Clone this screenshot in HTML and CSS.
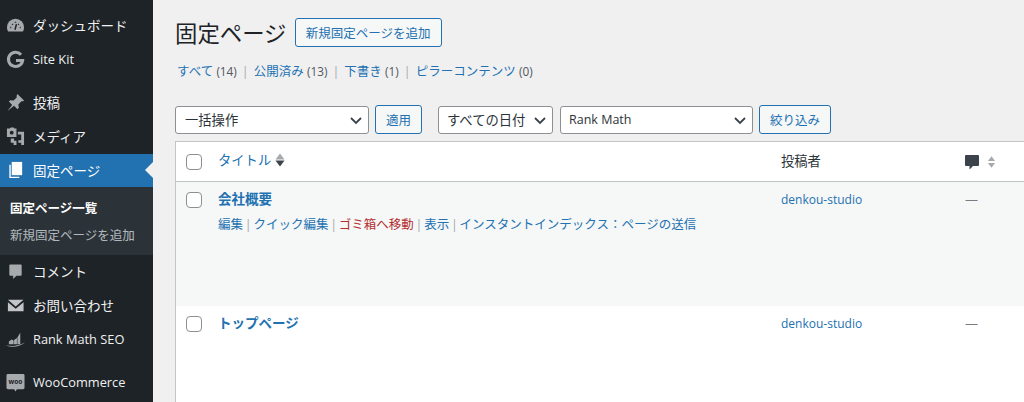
FILE: index.html
```html
<!DOCTYPE html>
<html lang="ja">
<head>
  <meta charset="UTF-8">
  <title>固定ページ</title>
  <link rel="stylesheet" href="styles.css">
</head>
<body>

  <nav class="sidebar">
    <ul class="menu">
      <li><a href="#">
        <svg class="menu-icon" viewBox="0 0 20 20"><path d="M10 3a9 9 0 0 0-9 9c0 1.500.4 3 1.200 4.200h15.600A9 9 0 0 0 19 12a9 9 0 0 0-9-9z"/><path class="cut" d="M9.500 14.500l1.500-6M4.500 12h1M14.500 12h1M6.500 8.500l.7.7M10 6v1M13.500 8.500l-.7.7"/></svg>
        ダッシュボード</a></li>
      <li><a href="#">
        <svg class="menu-icon" viewBox="0 0 20 20"><path class="stroke" d="M15.800 5A7.500 7.500 0 1 0 17.500 11H10.500"/></svg>
        <span class="latin">Site Kit</span></a></li>
      <li class="gap"><a href="#">
        <svg class="menu-icon" viewBox="0 0 20 20"><path d="M12 1l7 7-1.500 1-1-.5-3.500 3.500.5 3.500-1.500 1.500-3.500-3.500L1.500 19l5-6.500L3 9l1.500-1.500 3.500.5L11.500 4.500 11 3.500z"/></svg>
        投稿</a></li>
      <li><a href="#">
        <svg class="menu-icon" viewBox="0 0 20 20"><path d="M1 1.500h3l1-1h3l1 1h2v9H1z"/><circle class="hole" cx="6" cy="6" r="2"/><path d="M12.500 5H19v14h-3v-2.500h-3v-2.500h3V8h-3.500zM5 12h3.500v2.500H11V19H8v-2.500H5z"/></svg>
        メディア</a></li>
      <li class="current"><a href="#">
        <svg class="menu-icon" viewBox="0 0 20 20"><path d="M6 2h11v14H6z"/><path d="M3.500 5H5v12.500h9V19H3.500z"/></svg>
        固定ページ</a>
        <ul class="submenu">
          <li class="sub-current"><a href="#">固定ページ一覧</a></li>
          <li><a href="#">新規固定ページを追加</a></li>
        </ul>
      </li>
      <li><a href="#">
        <svg class="menu-icon" viewBox="0 0 20 20"><path d="M4.500 2.500h11a1 1 0 0 1 1 1v10a1 1 0 0 1-1 1H11l-3.500 3.500v-3.500h-3a1 1 0 0 1-1-1v-10a1 1 0 0 1 1-1z"/></svg>
        コメント</a></li>
      <li><a href="#">
        <svg class="menu-icon" viewBox="0 0 20 20"><path class="bright" d="M2 4h16.500L10.200 11zM2 6.500l8.200 7 8.300-7V16H2z"/></svg>
        お問い合わせ</a></li>
      <li><a href="#">
        <svg class="menu-icon" viewBox="0 0 20 20"><path d="M3 12l3-2 2 1v4H3zM8.500 10.500l3-2V15h-3zM12 8l3-5v12h-3z"/><path d="M0 16c6 1.500 13 1 20-3-5 5-14 6-20 3z"/></svg>
        <span class="latin">Rank Math SEO</span></a></li>
      <li class="gap"><a href="#">
        <svg class="menu-icon" viewBox="0 0 20 20"><path d="M2 1h16a1.500 1.500 0 0 1 1.500 1.500v13A1.500 1.500 0 0 1 18 17h-6.500L10 19.500 8.500 17H2A1.500 1.500 0 0 1 .5 15.500v-13A1.500 1.500 0 0 1 2 1z"/><text class="woo-text" x="10" y="11.500" text-anchor="middle">woo</text></svg>
        <span class="latin">WooCommerce</span></a></li>
    </ul>
  </nav>

  <main class="content">
    <div class="title-row">
      <h1>固定ページ</h1>
      <a class="button add-new" href="#">新規固定ページを追加</a>
    </div>

    <ul class="views">
      <li><a href="#">すべて</a> <span class="count">(14)</span></li>
      <li><a href="#">公開済み</a> <span class="count">(13)</span></li>
      <li><a href="#">下書き</a> <span class="count">(1)</span></li>
      <li><a href="#">ピラーコンテンツ</a> <span class="count">(0)</span></li>
    </ul>

    <div class="tablenav">
      <div class="select select-bulk">一括操作
        <svg class="chevron" viewBox="0 0 16 16"><path d="M3 6l5 5 5-5"/></svg></div>
      <a class="button apply" href="#">適用</a>
      <div class="select select-date">すべての日付
        <svg class="chevron" viewBox="0 0 16 16"><path d="M3 6l5 5 5-5"/></svg></div>
      <div class="select select-rank">Rank Math
        <svg class="chevron" viewBox="0 0 16 16"><path d="M3 6l5 5 5-5"/></svg></div>
      <a class="button filter" href="#">絞り込み</a>
    </div>

    <table class="pages">
      <thead>
        <tr>
          <th class="col-check"><span class="checkbox"></span></th>
          <th class="col-title"><a href="#">タイトル</a>
            <svg class="sort" viewBox="0 0 10 14"><path class="sort-up" d="M5 .5l4.500 6H.5z"/><path class="sort-down" d="M5 13.500l4.500-6H.5z"/></svg></th>
          <th class="col-author">投稿者</th>
          <th class="col-comments">
            <svg class="bubble" viewBox="0 0 14 16"><path d="M1 1h12a1 1 0 0 1 1 1v9a1 1 0 0 1-1 1H8l-3.500 3.500V12H1a1 1 0 0 1-1-1V2a1 1 0 0 1 1-1z"/></svg>
            <svg class="sort sort-plain" viewBox="0 0 10 14"><path d="M5 .5l4 5.500H1zM5 13.500L1 8h8z"/></svg>
          </th>
        </tr>
      </thead>
      <tbody>
        <tr class="alt tall">
          <td class="col-check"><span class="checkbox"></span></td>
          <td class="col-title">
            <a class="row-title" href="#">会社概要</a>
            <div class="row-actions">
              <a href="#">編集</a> | <a href="#">クイック編集</a> | <a class="trash" href="#">ゴミ箱へ移動</a> | <a href="#">表示</a> | <a href="#">インスタントインデックス：ページの送信</a>
            </div>
          </td>
          <td class="col-author"><a href="#">denkou-studio</a></td>
          <td class="col-comments dash">—</td>
        </tr>
        <tr>
          <td class="col-check"><span class="checkbox"></span></td>
          <td class="col-title"><a class="row-title" href="#">トップページ</a></td>
          <td class="col-author"><a href="#">denkou-studio</a></td>
          <td class="col-comments dash">—</td>
        </tr>
      </tbody>
    </table>
  </main>

</body>
</html>
```

FILE: styles.css
```css
* {
  margin: 0;
  padding: 0;
  box-sizing: border-box;
}

html, body {
  height: 402px;
  overflow: hidden;
}

body {
  display: flex;
  background-color: #f0f0f1;
  font-family: "Open Sans", "Noto Sans CJK JP", sans-serif;
  font-size: 13px;
  color: #3c434a;
}

a {
  color: #2271b1;
  text-decoration: none;
}

ul {
  list-style: none;
}

/* sidebar */
.sidebar {
  flex: 0 0 153px;
  background-color: #1d2327;
  padding-top: 9px;
}

.menu > li > a {
  display: flex;
  align-items: center;
  gap: 8px;
  height: 34px;
  padding: 0 0 2px 6px;
  color: #f0f0f1;
  font-size: 13.5px;
  position: relative;
}

.menu > li.gap {
  margin-top: 9px;
}

.latin {
  font-size: 12.8px;
}

.menu-icon {
  flex: 0 0 19px;
  width: 19px;
  height: 19px;
  fill: #a7aaad;
}

.menu-icon .cut {
  fill: none;
  stroke: #1d2327;
  stroke-width: 1.6;
}

.menu-icon .hole {
  fill: #1d2327;
}

.menu-icon .stroke {
  fill: none;
  stroke: #a7aaad;
  stroke-width: 3.2;
}

.menu-icon .bright {
  fill: #c3c4c7;
}

.woo-text {
  fill: #1d2327;
  font-size: 7px;
  font-weight: 700;
}

.menu > li.current > a {
  height: 33px;
  background-color: #2271b1;
  color: #fff;
}

.current .menu-icon {
  fill: #fff;
}

/* little notch pointing at the content */
.current > a::after {
  content: "";
  position: absolute;
  right: 0;
  top: 8px;
  border: 8px solid transparent;
  border-right-color: #f0f0f1;
  border-left-width: 0;
}

.submenu {
  background-color: #2c3338;
  padding: 8px 0 6px;
}

.submenu a {
  display: block;
  height: 27px;
  line-height: 27px;
  padding-left: 10px;
  font-size: 12.5px;
  color: rgba(240, 246, 252, 0.7);
}

.submenu .sub-current a {
  color: #fff;
  font-weight: 700;
}

/* main */
.content {
  flex: 1;
  min-width: 0;
  padding: 16px 0 0 22px;
}

.title-row {
  display: flex;
  align-items: center;
  gap: 8px;
}

h1 {
  font-size: 22.4px;
  font-weight: 400;
  color: #1d2327;
}

.button {
  display: flex;
  align-items: center;
  justify-content: center;
  height: 29px;
  border: 1px solid #2271b1;
  border-radius: 3px;
  background-color: #f6f7f7;
  font-size: 12.5px;
}

.add-new {
  width: 147px;
}

.views {
  display: flex;
  margin-top: 11px;
  height: 20px;
  align-items: center;
  padding-left: 2px;
  font-size: 12.5px;
}

.views li + li::before {
  content: "|";
  color: #a7aaad;
  margin: 0 5px;
}

.count {
  color: #50575e;
  font-size: 11.8px;
}

.tablenav {
  display: flex;
  align-items: center;
  margin-top: 25px;
}

.select {
  display: flex;
  align-items: center;
  justify-content: space-between;
  height: 28px;
  padding: 0 4px 0 9px;
  background-color: #fff;
  border: 1px solid #8c8f94;
  border-radius: 3px;
  font-size: 13.3px;
  color: #2c3338;
}

.select-bulk {
  width: 194px;
}

.select-date {
  width: 115px;
  margin-left: 16px;
  padding-left: 8px;
}

.select-rank {
  width: 193px;
  margin-left: 7px;
  padding-left: 8px;
  font-size: 12.5px;
}

.apply {
  width: 47px;
  margin-left: 6px;
}

.filter {
  width: 72px;
  margin-left: 6px;
}

.chevron {
  width: 16px;
  height: 16px;
  fill: none;
  stroke: #3c434a;
  stroke-width: 1.8;
}

/* table */
.pages {
  width: 849px;
  margin-top: 7px;
  table-layout: fixed;
  border-collapse: separate;
  border-spacing: 0;
  background-color: #fff;
  border-top: 1px solid #c3c4c7;
  border-left: 1px solid #c3c4c7;
}

.pages th {
  height: 40px;
  font-weight: 400;
  text-align: left;
  vertical-align: middle;
  border-bottom: 1px solid #c3c4c7;
  font-size: 13.3px;
  color: #2c3338;
}

.pages td {
  vertical-align: top;
  padding-top: 8px;
  height: 96px;
}

.pages td.col-title {
  padding-top: 6px;
}

.pages tr.tall td {
  height: 124px;
}

.alt td {
  background-color: #f6f7f7;
}

.col-check {
  width: 42px;
  padding-left: 10px;
}

.col-title {
  width: 563px;
}

.pages th.col-title {
  padding-bottom: 4px;
}

.pages th.col-author {
  padding-bottom: 2px;
}

.col-author {
  width: 184px;
}

.checkbox {
  display: block;
  width: 16px;
  height: 16px;
  background-color: #fff;
  border: 1px solid #8c8f94;
  border-radius: 4px;
}

.pages td .checkbox {
  margin-top: 2px;
}

.sort {
  width: 10px;
  height: 14px;
  vertical-align: -2px;
}

.sort-up {
  fill: #a7aaad;
}

.sort-down {
  fill: #3c434a;
}

.sort-plain {
  fill: #a7aaad;
  width: 9px;
  margin-left: 5px;
}

.bubble {
  width: 14px;
  height: 16px;
  fill: #3c434a;
  vertical-align: -3px;
}

.row-title {
  font-size: 13.5px;
  font-weight: 600;
}

.row-actions {
  margin-top: 6px;
  font-size: 12.5px;
  word-spacing: -1.5px;
  color: #a7aaad;
}

.trash {
  color: #b32d2e;
}

.col-author a {
  font-size: 12px;
}

.dash {
  color: #787c82;
}
```
